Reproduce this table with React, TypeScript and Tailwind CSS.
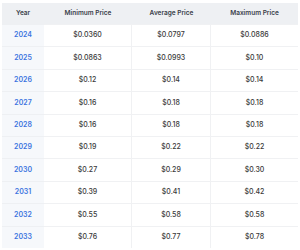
import React from "react";

const rows = [
  ["2024", "$0.0360", "$0.0797", "$0.0886"],
  ["2025", "$0.0863", "$0.0993", "$0.10"],
  ["2026", "$0.12", "$0.14", "$0.14"],
  ["2027", "$0.16", "$0.18", "$0.18"],
  ["2028", "$0.16", "$0.18", "$0.18"],
  ["2029", "$0.19", "$0.22", "$0.22"],
  ["2030", "$0.27", "$0.29", "$0.30"],
  ["2031", "$0.39", "$0.41", "$0.42"],
  ["2032", "$0.55", "$0.58", "$0.58"],
  ["2033", "$0.76", "$0.77", "$0.78"],
];

export default function App() {
  return (
    <div className="w-[300px] h-[250px] bg-white pt-[3px] pl-[2px] pr-[2px]" style={{ fontFamily: "Inter, 'Noto Sans', sans-serif" }}>
      <div className="grid grid-cols-[42px_88px_79px_87px]">
        <div className="h-[21px] flex items-center justify-center bg-[#eef0f3] text-[6.5px] font-semibold text-[#3a3f4a]">Year</div>
        <div className="h-[21px] flex items-center justify-center bg-[#eef0f3] text-[6.5px] font-semibold text-[#3a3f4a]">Minimum Price</div>
        <div className="h-[21px] flex items-center justify-center bg-[#eef0f3] text-[6.5px] font-semibold text-[#3a3f4a]">Average Price</div>
        <div className="h-[21px] flex items-center justify-center bg-[#eef0f3] text-[6.5px] font-semibold text-[#3a3f4a]">Maximum Price</div>
        {rows.map((r) => (
          <React.Fragment key={r[0]}>
            <div className="h-[22.4px] flex items-center justify-center bg-[#f6f8fb] border-t border-[#eef0f3] text-[7px] font-semibold text-[#3d74e0]">{r[0]}</div>
            <div className="h-[22.4px] flex items-center justify-center bg-white border-t border-r border-[#f0f1f3] text-[7px] font-medium text-[#3a3a3a]">{r[1]}</div>
            <div className="h-[22.4px] flex items-center justify-center bg-white border-t border-r border-[#f0f1f3] text-[7px] font-medium text-[#3a3a3a]">{r[2]}</div>
            <div className="h-[22.4px] flex items-center justify-center bg-white border-t border-[#f0f1f3] text-[7px] font-medium text-[#3a3a3a]">{r[3]}</div>
          </React.Fragment>
        ))}
      </div>
    </div>
  );
}
